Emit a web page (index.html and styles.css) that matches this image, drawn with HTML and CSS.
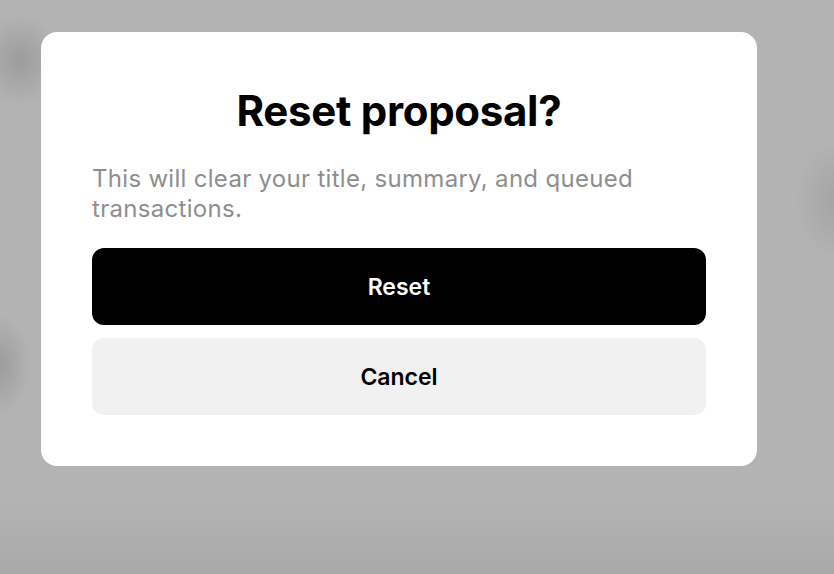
FILE: index.html
```html
<!DOCTYPE html>
<html lang="en">
<head>
<meta charset="utf-8">
<title>Reset proposal?</title>
<link rel="stylesheet" href="styles.css">
</head>
<body>
<div class="overlay">
  <div class="dialog" role="dialog" aria-labelledby="dlg-title">
    <h1 class="dialog-title" id="dlg-title">Reset proposal?</h1>
    <p class="dialog-text">This will clear your title, summary, and queued transactions.</p>
    <div class="dialog-actions">
      <button class="btn btn-primary">Reset</button>
      <button class="btn btn-secondary">Cancel</button>
    </div>
  </div>
</div>
</body>
</html>
```

FILE: styles.css
```css
html, body {
  margin: 0;
  padding: 0;
  height: 100%;
}
body {
  font-family: Inter, "Noto Sans", sans-serif;
  background-color: #b3b3b3;
  background-image:
    radial-gradient(ellipse 40px 45px at 20px 60px, rgba(150,150,150,0.8), rgba(179,179,179,0)),
    radial-gradient(ellipse 30px 50px at 0px 365px, rgba(150,150,150,0.8), rgba(179,179,179,0)),
    radial-gradient(ellipse 45px 60px at 840px 200px, rgba(155,155,155,0.7), rgba(179,179,179,0)),
    linear-gradient(to bottom, rgba(0,0,0,0) 0, rgba(0,0,0,0) 500px, rgba(0,0,0,0.06) 574px);
  background-repeat: no-repeat;
}
.overlay {
  padding: 32px 0 0 41px;
}
.dialog {
  width: 716px;
  box-sizing: border-box;
  background: #fff;
  border-radius: 16px;
  padding: 51px 51px 51px;
}
.dialog-title {
  margin: 0;
  text-align: center;
  font-size: 42px;
  font-weight: 700;
  line-height: 56px;
  color: #000;
  letter-spacing: -0.3px;
}
.dialog-text {
  margin: 25px 0 0;
  font-size: 24px;
  line-height: 30px;
  color: #8e8e8e;
  letter-spacing: 0.3px;
}
.dialog-actions {
  margin-top: 24px;
  display: flex;
  flex-direction: column;
  gap: 13px;
}
.btn {
  height: 77px;
  border: 0;
  border-radius: 12px;
  font-family: inherit;
  font-size: 23px;
  font-weight: 600;
  cursor: pointer;
}
.btn-primary {
  background: #000;
  color: #fff;
}
.btn-secondary {
  background: #f1f1f1;
  color: #000;
}
```
